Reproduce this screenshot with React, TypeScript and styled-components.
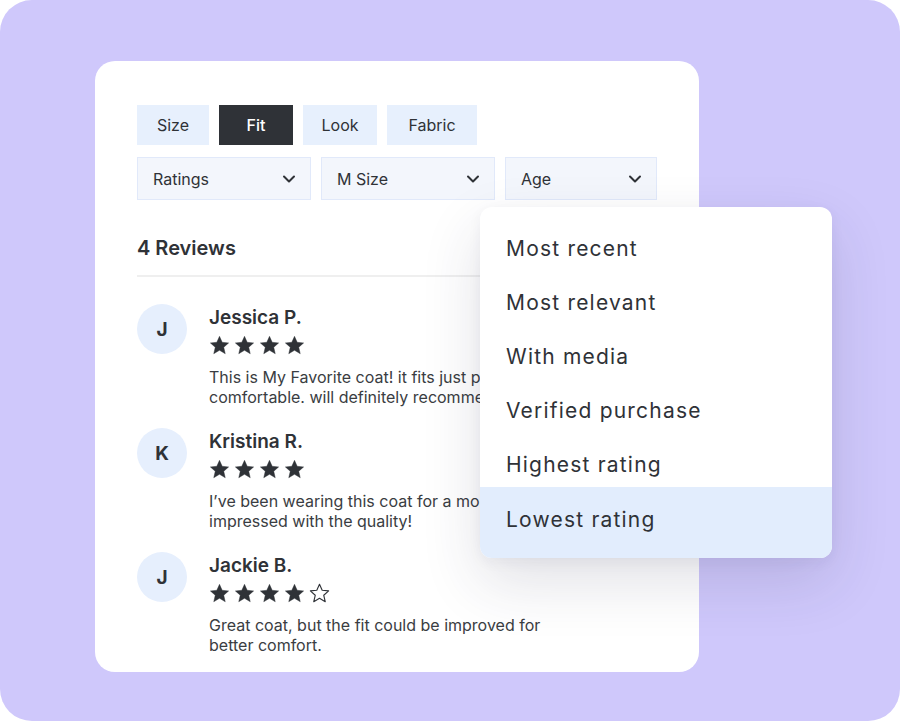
import React from "react";
import styled, { createGlobalStyle } from "styled-components";

const Global = createGlobalStyle`
  html, body { margin: 0; padding: 0; background: #ffffff; }
  body { font-family: Inter, "Noto Sans", sans-serif; color: #2f3237; }
`;

const Stage = styled.div`
  width: 900px;
  height: 721px;
  box-sizing: border-box;
  background: #cfc8fb;
  border-radius: 32px;
  padding: 61px 0 0 95px;
  overflow: hidden;
`;

const Card = styled.div`
  position: relative;
  width: 604px;
  height: 611px;
  box-sizing: border-box;
  background: #ffffff;
  border-radius: 20px;
  padding: 44px 42px 0 42px;
`;

const TabRow = styled.div`
  display: flex;
  gap: 10px;
`;

const Tab = styled.div<{ $active?: boolean; $w: number }>`
  width: ${(p) => p.$w}px;
  height: 40px;
  display: flex;
  align-items: center;
  justify-content: center;
  font-size: 16px;
  font-weight: ${(p) => (p.$active ? 500 : 400)};
  background: ${(p) => (p.$active ? "#2f3237" : "#e7f0fd")};
  color: ${(p) => (p.$active ? "#ffffff" : "#2f3237")};
`;

const SelectRow = styled.div`
  display: flex;
  gap: 10px;
  margin-top: 12px;
`;

const Select = styled.div<{ $w: number }>`
  width: ${(p) => p.$w}px;
  height: 43px;
  box-sizing: border-box;
  border: 1.5px solid #e1e9fa;
  background: #f3f6fc;
  display: flex;
  align-items: center;
  justify-content: space-between;
  padding: 0 11px 0 15px;
  font-size: 16px;
  color: #2f3237;
`;

const Heading = styled.div`
  margin-top: 36px;
  font-size: 20px;
  line-height: 24px;
  font-weight: 600;
  color: #2f3237;
`;

const Divider = styled.div`
  margin-top: 15px;
  height: 2px;
  background: #efefef;
  width: 520px;
`;

const List = styled.div`
  margin-top: 27px;
  display: flex;
  flex-direction: column;
  gap: 21px;
`;

const Review = styled.div`
  display: flex;
  gap: 22px;
  align-items: flex-start;
`;

const Avatar = styled.div`
  flex: none;
  width: 50px;
  height: 50px;
  border-radius: 50%;
  background: #e6effd;
  display: flex;
  align-items: center;
  justify-content: center;
  font-size: 19px;
  font-weight: 700;
  color: #2f3237;
`;

const Body = styled.div`
  display: flex;
  flex-direction: column;
  padding-top: 2px;
`;

const Name = styled.div`
  font-size: 19px;
  line-height: 24px;
  font-weight: 600;
  color: #2f3237;
`;

const Stars = styled.div`
  display: flex;
  gap: 4px;
  margin-top: 5px;
  height: 20px;
  align-items: center;
`;

const Text = styled.div`
  margin-top: 12px;
  font-size: 16px;
  line-height: 20px;
  color: #3a3d42;
  width: 345px;
`;

const Menu = styled.div`
  position: absolute;
  left: 385px;
  top: 146px;
  width: 352px;
  box-sizing: border-box;
  background: #ffffff;
  border-radius: 12px;
  padding-top: 14px;
  overflow: hidden;
  box-shadow: 0 24px 60px rgba(40, 40, 80, 0.14), 0 4px 14px rgba(40, 40, 80, 0.05);
`;

const Item = styled.div<{ $active?: boolean }>`
  height: 54px;
  display: flex;
  align-items: center;
  padding: 0 26px;
  font-size: 21px;
  letter-spacing: 1.2px;
  color: #2f3237;
  background: ${(p) => (p.$active ? "#e2edfd" : "transparent")};
  ${(p) => (p.$active ? "padding-top: 5px; padding-bottom: 12px; margin-top: -4px;" : "")}
`;

const Chevron = () => (
  <svg width="20" height="20" viewBox="0 0 24 24" fill="none" stroke="#2f3237" strokeWidth="2.4" strokeLinecap="round" strokeLinejoin="round">
    <path d="M6 9l6 6 6-6" />
  </svg>
);

const StarIcon = ({ filled }: { filled: boolean }) => (
  <svg width="21" height="20" viewBox="0 0 24 23">
    <path
      d="M12 1.5l3.1 6.9 7.4.7-5.6 5 1.7 7.4L12 17.6l-6.6 3.9 1.7-7.4-5.6-5 7.4-.7z"
      fill={filled ? "#2f3237" : "none"}
      stroke="#2f3237"
      strokeWidth={filled ? 0.5 : 1.3}
      strokeLinejoin="round"
    />
  </svg>
);

const reviews = [
  {
    initial: "J",
    name: "Jessica P.",
    stars: 4,
    empty: 0,
    text: "This is My Favorite coat! it fits just perfectly, comfortable. will definitely recommend it!",
  },
  {
    initial: "K",
    name: "Kristina R.",
    stars: 4,
    empty: 0,
    text: "I’ve been wearing this coat for a month and impressed with the quality!",
  },
  {
    initial: "J",
    name: "Jackie B.",
    stars: 4,
    empty: 1,
    text: "Great coat, but the fit could be improved for better comfort.",
  },
];

const menuItems = ["Most recent", "Most relevant", "With media", "Verified purchase", "Highest rating", "Lowest rating"];

export default function App() {
  return (
    <>
      <Global />
      <Stage>
        <Card>
          <TabRow>
            <Tab $w={72}>Size</Tab>
            <Tab $w={74} $active>Fit</Tab>
            <Tab $w={74}>Look</Tab>
            <Tab $w={90}>Fabric</Tab>
          </TabRow>
          <SelectRow>
            <Select $w={174}>Ratings<Chevron /></Select>
            <Select $w={174}>M Size<Chevron /></Select>
            <Select $w={152}>Age<Chevron /></Select>
          </SelectRow>
          <Heading>4 Reviews</Heading>
          <Divider />
          <List>
            {reviews.map((r, i) => (
              <Review key={i}>
                <Avatar>{r.initial}</Avatar>
                <Body>
                  <Name>{r.name}</Name>
                  <Stars>
                    {Array.from({ length: r.stars }).map((_, k) => (
                      <StarIcon key={k} filled />
                    ))}
                    {Array.from({ length: r.empty }).map((_, k) => (
                      <StarIcon key={"e" + k} filled={false} />
                    ))}
                  </Stars>
                  <Text>{r.text}</Text>
                </Body>
              </Review>
            ))}
          </List>
          <Menu>
            {menuItems.map((m, i) => (
              <Item key={m} $active={i === menuItems.length - 1}>{m}</Item>
            ))}
          </Menu>
        </Card>
      </Stage>
    </>
  );
}
